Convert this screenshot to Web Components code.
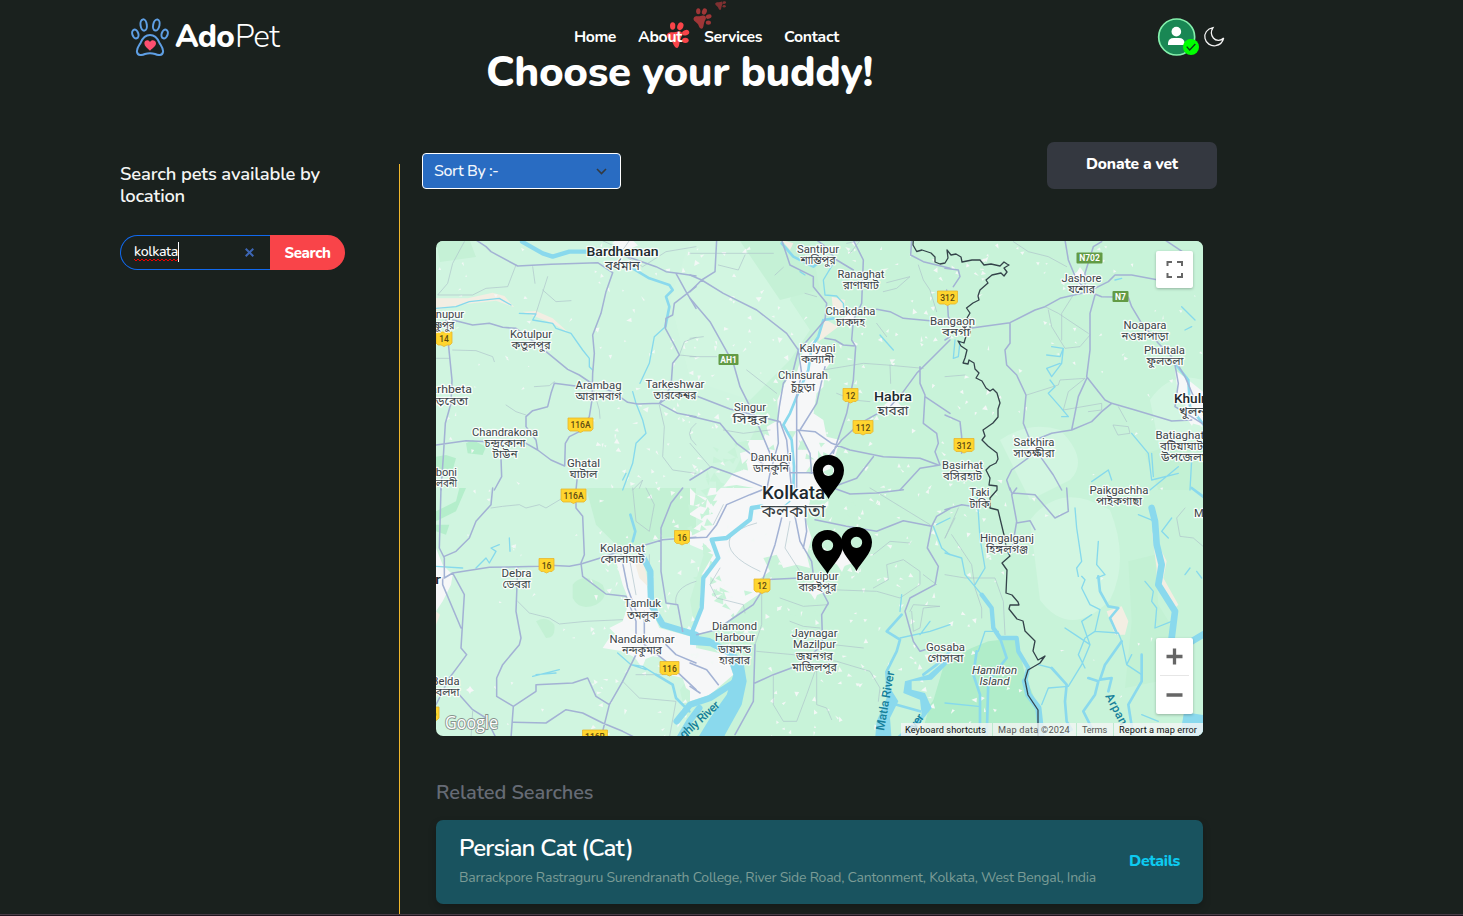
<!DOCTYPE html>
<html lang="en">
<head>
<meta charset="utf-8">
<title>AdoPet</title>
<style>
html,body{margin:0;height:916px;overflow:hidden;background:#1a211e}
body{font-family:Nunito,Lato,"Open Sans",sans-serif;color:#fff}
</style>
</head>
<body>
<pet-app></pet-app>
<script>
const define=(name,html,setup)=>customElements.define(name,class extends HTMLElement{
  connectedCallback(){
    if(this.shadowRoot)return;
    const r=this.attachShadow({mode:'open'});
    r.innerHTML=html;
    if(setup)setup.call(this,r);
  }
});

/* Text run tracked so that it fills the given width */
define('fit-text',`<style>:host{display:inline-block;white-space:nowrap}span{display:inline-block}</style><span><slot></slot></span>`,function(r){
  const s=r.querySelector('span'),w=+this.getAttribute('w');
  const n=this.textContent.length;
  s.style.letterSpacing=((w-s.getBoundingClientRect().width)/n)+'px';
});

define('pet-logo',`<style>
:host{display:flex;align-items:flex-start;margin-top:18px;width:149px}
svg{width:38px;height:38px;flex:none;margin-right:6px}
div{font-size:31.500px;line-height:36px;display:flex;gap:1px;margin-top:1px}
b{font-weight:800}i{font-style:normal;font-weight:300}
</style>
<svg viewBox="0 0 114 114" fill="none" stroke="#5f9fe4" stroke-width="6">
<ellipse cx="38" cy="21" rx="9.5" ry="17" transform="rotate(-8 38 21)"/><ellipse cx="76" cy="21" rx="9.5" ry="17" transform="rotate(12 76 21)"/>
<ellipse cx="13" cy="48" rx="9" ry="13.500" transform="rotate(-18 13 48)"/><ellipse cx="101" cy="48" rx="9" ry="13.500" transform="rotate(18 101 48)"/>
<path d="M57 51C41 51 34 62 29 74C24 83 16 91 18 102C20 114 33 112 42 108Q57 103 72 108C81 112 94 114 96 102C98 91 90 83 85 74C80 62 73 51 57 51Z"/>
<path d="M57 98C48 90 40 84 40 76C40 67 52 63 57 72C62 63 75 67 75 76C75 84 66 90 57 98Z" fill="#ff4f70" stroke="none"/></svg>
<div><b><fit-text w="59">Ado</fit-text></b><i><fit-text w="44">Pet</fit-text></i></div>`);

define('nav-links',`<style>
:host{display:flex;gap:22px;font-size:15.800px;font-weight:700;line-height:20px;margin-top:27px;margin-left:294px;width:266px;position:relative}
fit-text{position:relative}
svg{position:absolute;left:89px;top:-26px;width:70px;height:48px}
</style>
<svg viewBox="0 0 210 144" fill="#f94449">
<defs><g id="p"><path d="M-31-4C-26-14-12-8-1-12C12-17 20-6 11 6C6 15 7 28 3 34C-2 42-11 31-13 23C-17 12-36 8-31-4Z"/><ellipse cx="-14" cy="-29" rx="8" ry="11"/><ellipse cx="9" cy="-28" rx="9" ry="12" transform="rotate(20 9 -28)"/><ellipse cx="25" cy="-9" rx="11" ry="8" transform="rotate(-20 25 -9)"/><ellipse cx="24" cy="14" rx="10" ry="8"/></g></defs>
<use href="#p" transform="translate(43 104)"/><use href="#p" opacity=".6" transform="translate(117 54) scale(.8)"/><use href="#p" opacity=".45" transform="translate(172 9) scale(.48)"/></svg>
<fit-text w="42">Home</fit-text><fit-text w="44">About</fit-text><fit-text w="58">Services</fit-text><fit-text w="55">Contact</fit-text>`);

define('user-tools',`<style>:host{display:flex;margin-left:318px;margin-top:18px;gap:8px}
.a{width:38px;height:38px}.m{width:20px;height:20px;margin-top:9px;overflow:visible}svg{overflow:visible}</style>
<svg class="a" viewBox="0 0 114 114"><circle cx="56" cy="57" r="54" fill="#198754" stroke="#84f0ac" stroke-width="5"/><circle cx="55" cy="41" r="14.500" fill="#fff"/><path d="M30 81V75Q32 60 47 60H63Q78 60 80 75V81Z" fill="#fff"/><circle cx="99" cy="87" r="24" fill="#0f0"/><path d="M86 86L95 96L112 78" stroke="#0b3d18" stroke-width="4" fill="none"/></svg>
<svg class="m" viewBox="0 0 60 60" fill="none" stroke="#f4f4f4" stroke-width="3.800"><path d="M27 2C9 5 0 19 3 34C6 49 20 58 35 56C47 54 56 46 59 33C51 42 36 43 28 33C20 23 22 10 27 2Z"/></svg>`);

define('search-panel',`<style>
:host{display:block;width:279px;padding-top:10px;box-sizing:border-box}
h2{margin:0;font-size:18.400px;line-height:22px;font-weight:600;color:#f4f5f4;display:flex;flex-direction:column;align-items:flex-start}
form{display:flex;width:225px;height:35px;margin-top:28px}
.in{box-sizing:border-box;width:150px;border:1px solid #1169ee;border-right:0;border-radius:18px 0 0 18px;padding:0 16px 0 13px;display:flex;align-items:center;justify-content:space-between;font-size:14.200px;font-weight:500}
.v{display:flex;position:relative;line-height:20px;border-right:1px solid #fff;margin-top:-2px}
.v svg{position:absolute;left:0;top:16px}
.b{width:75px;background:#f94449;border-radius:0 18px 18px 0;display:flex;align-items:center;justify-content:center;font-weight:800;font-size:15px}
</style>
<h2><fit-text w="200">Search pets available by</fit-text><fit-text w="65">location</fit-text></h2>
<form><div class="in"><span class="v"><fit-text w="44">kolkata</fit-text><svg width="44" height="4" viewBox="0 0 44 4" fill="none" stroke="#f20000"><path d="M0 1L2 3L4 1L6 3L8 1L10 3L12 1L14 3L16 1L18 3L20 1L22 3L24 1L26 3L28 1L30 3L32 1L34 3L36 1L38 3L40 1L42 3L44 1"/></svg></span>
<svg width="9" height="9" viewBox="0 0 9 9" stroke="#3d66b4" stroke-width="2"><path d="M.7.700L8.300 8.300M8.300.700L.7 8.300"/></svg></div>
<div class="b"><fit-text w="46">Search</fit-text></div></form>`);

define('sort-select',`<style>:host{display:flex;box-sizing:border-box;width:199px;height:36px;border:1px solid #fff;border-radius:4px;background:#296cc2;align-items:center;justify-content:space-between;padding:0 13px 0 11px;font-size:16px;font-weight:500;margin-top:11px;color:#f1f6fc}</style>
<fit-text w="64.500">Sort By :-</fit-text><svg width="11" height="7" viewBox="0 0 11 7" fill="none" stroke="#343a40" stroke-width="1.600"><path d="M1 1L5.500 5.500L10 1"/></svg>`);

define('donate-button',`<style>:host{display:flex;width:170px;height:47px;border-radius:7px;background:#343840;justify-content:center;font-size:15.500px;font-weight:800;line-height:43px}</style><fit-text w="92">Donate a vet</fit-text>`);

define('map-pin',`<style>:host{position:absolute;width:31px;height:44px}svg{display:block}</style>
<svg width="31" height="44" viewBox="0 0 93 132"><path fill-rule="evenodd" d="M46.500 0C20 0 0 20 0 46C0 80 34 108 46.500 132C59 108 93 80 93 46C93 20 73 0 46.500 0ZM46.500 29A17 17 0 1 1 46.400 29Z"/></svg>`);

/* Map layers, each a quadrant drawn at three units per pixel */
const tiles=[
{at:[436,240],
 road:"M120 0L150 20L165 35L245 78L345 73L485 68L530 98M530 98L510 155L495 220L470 285L475 340L470 400L468 480L460 530L430 575L400 590L388 610L386 678M50 240L110 255L160 250L200 262L240 265L300 310L355 355L395 388L430 405L470 432L530 455L575 487L605 492L670 490L715 460L780 470M670 490L725 520L780 530M30 240L40 340L48 420L45 490L28 550L22 650L15 750M0 615L90 602L160 605L270 610L305 630L345 660L386 678M470 445L355 430L345 460L335 500L290 512L270 530L270 560L300 600L305 630M195 655L197 710L175 750M425 700L420 750M560 45L660 80L690 95L725 100L780 108M720 100L750 155L780 205M780 140L715 190L710 225L690 235L688 265L715 315L730 345L710 370L705 440L670 490",
 thin:"M85 5L50 70L35 130L5 165L110 165L150 145L215 140L240 75M290 80L297 130M335 110L300 220M320 150L360 185L405 182M50 330L120 332L170 350L175 365M0 355L40 355M210 495L240 515L270 525M295 440L340 437L355 425M470 440L490 510L492 535M670 495L685 560L680 650L710 690L780 700M730 345L745 305L780 292M730 345L780 350M560 45L620 80L690 35L780 20M780 550Q740 580 780 615M500 2L560 30L580 2M590 750L620 720L610 745",
 river:"M590 85L640 115L700 135L710 150L690 170L700 200L688 260",
 creek:"M688 260L655 290L640 370L612 430M655 290L640 370L612 430M0 205L60 200L100 185L190 175L225 195M250 220L300 222L290 240L350 250L360 265L405 280L440 330L460 355L460 380L470 390M590 455L600 490L620 540L630 580L600 610L590 670L560 750M570 700L560 720",
 big:"M258 5L320 40L350 50L400 35L450 35L480 45",
 sand:"M0 175L95 175L170 158L205 168L235 202L180 182L90 192L0 210ZM260 215L300 213L350 235L400 280L350 250Z",
 dark:"M0 650L30 645L60 655L50 690L20 700L0 690ZM90 610L110 600L150 620L140 645L95 640Z"},
{at:[690,240],
 road:"M80 0L75 95L35 120L0 155M0 105L35 120L100 160L200 210L290 280L325 330L310 390L280 430L268 500L262 550L265 610L240 700L230 750M0 175L60 245L130 370L150 440L190 520L240 640M275 0L300 75L370 110L370 140L410 190L405 240L345 310L325 330L335 400L320 470L320 750M405 295L435 300L460 315L495 318M490 0L520 60L515 190L490 240L485 300L497 320L490 420L470 520L430 640M380 0L400 15L440 60L490 90M560 208L600 215L640 235L720 242L780 250M780 300L720 360L680 400L640 455L600 500L510 550L455 600L400 670M665 0L662 45L700 65L780 85M690 380L690 430L705 465L700 550L740 580L745 610L735 635L750 675L690 685L630 750M705 470L780 520M320 570L375 575L425 610L480 630L580 650L690 655L745 675M325 570L360 640L365 700M405 380L380 490L330 570M550 650L500 715L430 740M25 470L120 507L270 545L290 600L305 750M300 698L380 698M0 528L90 550L140 610L180 640L240 690M0 720L65 680L120 700L230 745",
 thin:"M0 40L250 40M85 75L145 90L165 45M255 105L280 82M345 160L380 170M580 155L620 145L660 110L590 128M685 75L700 120L720 150L740 215M400 390L520 370L590 375L700 385M560 250L590 290M600 375L602 430M540 485L490 480L440 460M0 295L40 290M170 390L260 460M0 350L80 350M100 570L160 580L240 570M470 10L510 2L480 40M0 610L60 680",
 river:"M275 10L310 50L370 80L395 60M430 235L400 240L385 290L365 320L355 390L320 470L300 520L280 555L305 600L312 680L310 750",
 creek:"M430 70L400 120L405 165L440 168L460 190L462 220M330 95L345 105M570 285L610 330",
 sand:"M275 0L310 10L300 30ZM425 170L465 180L460 220L430 220ZM400 235L445 260L385 305Z",
 urban:"M340 330L370 300L400 320L420 370L405 390L400 440L380 460L370 520L400 540L410 590L450 600L435 650L450 680L440 700L410 720L400 750L225 750L140 735L100 740L130 700L160 690L150 640L180 630L170 600L220 600L230 560L265 540L262 480L290 420L320 400Z"},
{at:[945,240],
 road:"M0 85L40 90L45 110L25 140M5 150L10 230L25 260M75 265L195 248L270 210L300 200L345 175L430 155L490 125L510 105L560 105L640 120M360 0L370 60L395 120L430 155M470 5L445 20L420 100L420 150L470 170L550 172L560 200L590 250L640 310L690 360L720 410L750 480M450 165L435 220L435 330L425 410L480 480L500 490L570 510L680 543L740 540M425 415L400 470L380 570L320 580L270 600M380 570L440 545L470 515L500 490M195 248L195 310L180 330L185 375L215 405L243 465L235 550L255 600M290 655L325 705L350 750M255 650L200 690L185 720L195 750M690 375L700 430L690 500L780 555M660 0L720 40M0 525L45 545L50 590L50 640M0 300L15 290",
 thin:"M205 5L250 35L310 50L365 80M300 200L340 220L430 280M310 210L320 260L360 325L405 320L435 285M385 165L350 220L350 300M245 465L340 435L345 420L420 415L370 455L355 510L470 490L470 510L430 515M0 410L60 405M505 555L550 560L555 580L520 585ZM520 500L545 545",
 river:"M690 370L730 420L735 500L780 560",
 creek:"M320 320L355 325L345 350L305 345M355 325L350 370L320 410L305 385L345 370M315 420L330 440L310 460L345 500L370 530L350 530M30 300L25 355L40 350L45 305M440 725L490 690L500 720M560 580L610 640L620 720L700 700M620 640L625 710M740 660L735 750M710 200L750 240M720 270L740 260M615 750L700 680M510 120L530 115",
 urban:"M690 390L730 420L780 460L780 560L740 550L720 490L700 470Z",
 dark2:"M600 640L780 590L780 750L640 750Z"},
{at:[436,488],
 road:"M15 0L10 180L25 210L25 270L50 255L160 238L310 235L340 232L400 235L435 228L510 205L550 190L630 170L680 155L780 148M170 0L165 50L120 100L100 150L60 190L25 205M50 255L85 320L75 480L92 500L70 530L40 570L0 650M20 290L75 420M20 270L20 290M245 240L240 370L255 450L250 470L200 530L182 570L182 625L232 655L225 750M232 655L300 610L300 590L410 585L455 570L480 625L520 650M232 703L330 705L390 665L440 675L500 705L560 730L600 750M600 500L560 580L520 650L495 750M420 30L420 60L440 85L445 200L435 225L440 265L510 318L570 325L600 400L600 440M555 200L575 300L600 370M740 0L705 45L675 120L675 250L690 345L725 350L740 430M625 370L625 470L690 520L780 605M70 620L110 665L150 690L180 750M690 470L720 500L780 525",
 thin:"M165 60L200 55L250 50L270 60L310 50L330 60L380 30M245 340L280 375L340 390L370 408L450 400L560 395M590 0L600 100L640 130L655 50L630 0M560 580L610 630L720 640L700 750M600 560L700 560M640 200L640 330M780 280Q710 300 720 350M580 210L600 320M105 750L110 670",
 creek:"M120 240L150 210L160 225L180 190L165 180L190 170M220 150L222 190M0 235L80 240M290 565L370 545M300 560L360 555M545 495L585 530L630 545M585 530L620 535L660 560",
 river:"M660 560L710 590L720 630L760 670M583 80L598 130L590 160",
 huge:"M615 195L643 250L645 350L680 410L780 440M725 760L760 700L790 660",
 dark:"M0 70L60 40L70 0L90 0L60 70L0 100ZM0 110L40 110L30 140L0 130Z",
 dark2:"M410 290Q440 250 500 290Q520 330 480 350Q430 370 410 330ZM300 400Q330 380 355 410Q360 450 330 450ZM450 0L780 0L780 140L680 150L560 190L480 110Z",
 sand:"M590 200L620 210L640 300L610 270ZM0 370L12 380L0 410Z",
 urban:"M540 220L590 210L630 270L640 350L670 420L780 450L780 620L750 600L740 570L700 560L690 520L640 490L600 510L560 490L500 480L520 450L540 440L520 420L560 400L570 370L580 340L560 290ZM0 180L20 230L50 260L45 290L20 340L0 370Z"},
{at:[690,488],
 road:"M0 150L50 148L80 110L110 50L180 20L230 0M275 90L255 170L220 270L215 310L190 350L130 390L80 425L20 440M310 60L330 160L365 220L370 260L415 345L395 380L398 470L330 530L250 560L195 585M195 470L190 640L135 740M220 275L330 270M345 80L350 130L340 180M375 95L470 115L560 130L640 98L725 115L740 85L780 62M725 115L712 180L745 235L735 290L660 330L645 370L670 460L690 490L705 485M0 525L50 545L85 590M0 595L30 615M430 0L480 18L560 15L640 5",
 thin:"M120 150Q140 120 200 105M120 150Q100 200 210 250M100 50L70 110M300 100L285 180L330 250M270 330L340 355L415 350M300 400L340 415L390 420M200 490L310 500L440 520L540 550L570 600L565 640M250 560L250 650L280 700L320 700L350 620L375 550M380 550L380 650L410 660L425 695M430 470L520 480M90 240L60 290L80 330L160 350L165 375M550 200L600 160L660 165M700 260L740 290M550 300L595 275L590 230L640 215L690 250L690 290L630 330L560 310L420 305M660 370L670 350L750 355L700 360L690 420L670 430L665 370M215 310L215 410L195 470M540 0L720 110",
 river:"M635 380L590 430L630 455L620 490L590 550M780 490L740 530L700 560M620 650L690 670",
 big:"M215 55L185 60L180 95L110 150L65 155L85 210L40 270L35 360L5 435",
 creek:"M635 320L630 370M275 60L300 40M630 450L720 430L780 410M720 400L690 440M730 115L755 180L780 200M740 110L780 90",
 huge:"M-40 700L0 650L60 630L130 585",
 water:"M0 440L60 450L130 490L160 520L170 580L155 650L105 740L100 756L20 756L60 690L110 620L130 560L110 500L60 475L0 470ZM585 550L600 550L600 600L625 640L600 690L605 756L555 756L560 700L590 630ZM715 560L780 505L780 520L725 575L665 580L665 605L705 615L725 660L650 756L610 756L695 680L690 635L640 615L645 580Z",
 urban:"M0 0L20 20L50 30L60 0L350 0L360 40L345 90L365 150L350 200L360 240L320 230L280 240L260 200L220 210L240 250L200 280L220 310L160 350L130 390L60 430L10 440L30 350L35 260L70 200L0 170L0 130L40 100L0 80ZM20 480L110 500L130 560L60 620L0 640L0 500Z",
 isle:"M775 580L720 650L690 756L780 756Z"},
{at:[945,488],
 isle:"M0 520L80 480L130 460L215 450L240 560L280 660L280 756L-70 756L-30 620Z",
 road:"M0 65L50 50L100 58M195 0L200 15L270 20L330 90L370 70L365 0M215 0L200 20L215 100L200 190M215 105L255 98L270 125",
 thin:"M780 180L745 150L705 145L695 90L720 60M0 260L60 270L150 270L175 340L180 440M0 150L40 60M20 140L80 230L90 300L110 360L110 390M0 150L30 90",
 river:"M95 490L85 560L105 620L105 750M165 450L185 510L130 580L125 750M590 500L590 580L550 650L565 745M530 460L480 530L465 575L500 570L490 610M430 570L460 580L450 620L415 670L440 720M460 265L465 310L490 355L520 360L495 390L515 435M320 540L365 590L360 640L365 700L380 725L330 750M740 0L780 30",
 creek:"M410 265L420 275L410 300L435 350L465 365L450 430L520 435L530 460M0 645L100 655M95 0L105 150L120 240L90 290M0 195L50 210L60 260L110 320M390 60L395 120L410 220L395 240L400 265M460 160L455 230L480 260L455 270M600 280L625 310L620 340L635 360L630 420L680 400M680 90L650 130L670 150M320 540L280 530M290 650L310 600L370 595L410 530L435 470L390 440L360 420M435 470L410 400L440 380M100 490L120 430L160 430M530 460L545 530L590 560M545 530L560 500M720 260L735 240M755 250L770 270M580 80L630 100M450 430L420 450L400 500L420 540M640 700L590 680M0 720L20 740",
 big:"M110 320L140 360L145 420L165 450L215 450L220 490L250 540L240 580",
 huge:"M240 580L250 620L280 660L290 750",
 wide:"M620 60L630 100L635 170L650 230L640 290L690 370L680 450M740 460L790 430M750 690L740 750",
 sand:"M485 370L530 355L550 400L540 440L510 440ZM620 130L635 240L635 290L680 370L700 350L655 270L665 220Z",
 dark2:"M550 220L630 200L640 350L690 430L640 580L540 600L560 400Z"}
];
const border="M913.300 240L913 245L916.700 251.500L922 250L931 253L935 257L935 262L940 264L945 263L948 258L947 250L951 255L956 254L961 257L962 262L972 260L980 260L984 265L991 264L1000 266L1004 262L1007 264L1009 265L1004 268L1007 272L1004 276L1001 273L992 275L986 280L988 283L980 290L978 296L979 300L973 303L966.500 308L970 313L967 318L970 320L970 333L966 336L964 343L958 341L961 346L967 350L965 358L963 363L968 364L969 360L974 363L975 369L979 373L976 378L982 381L986 388L990 391L993 389L997 393L1000 403L998 409L998 417L993 423L983 430L985 436L982 440L988 446L997 453L998 459L996 463L990 466L986 470L990 478L989 485L997 486L997 490L990 498L990 508L998 510L1004 535L1007 551L1010 556L1002 563L1007 570L1006 593L1012 595L1018 602L1019 605L1010 605L1009 609L1017 619L1023 621L1025 631L1035 641L1033 651L1038 660L1045 656L1040 663L1028 670L1025 680L1028 695L1038 710L1038 740";
/* x, baseline, font size, [text, width, 1 = town in bold or 2 = island in italic] */
const labels=[
[622.500,255.500,13,["Bardhaman",72,1]],[622.500,269.500,12,["বর্ধমান",35]],
[818,252.500,11,["Santipur",42]],[818,263.500,11.500,["শান্তিপুর",35]],
[861,278,11,["Ranaghat",47]],[861,289,11.500,["রাণাঘাট",36]],
[850.500,314.500,11,["Chakdaha",50]],[850.500,325.500,11.500,["চাকদহ",29]],
[952.500,325,11,["Bangaon",45]],[956,336,11.500,["বনগাঁ",28]],
[531,338,11,["Kotulpur",42]],[531,349,11.500,["কতুলপুর",39]],
[444,318,11,["shnupur",40]],[440,329,11.500,["বিষ্ণুপুর",29]],
[817.500,352,11,["Kalyani",36]],[817.500,363,11.500,["কল্যানী",33]],
[803,379,11,["Chinsurah",50]],[803,390.500,11.500,["চুঁচুড়া",24]],
[598.500,388.500,11,["Arambag",46]],[598.500,399.500,11.500,["আরামবাগ",46]],
[675,387.500,11,["Tarkeshwar",59]],[675,398.500,11.500,["তারকেশ্বর",43]],
[447,393,11,["Garhbeta",50]],[448,404.500,11.500,["গড়বেতা",40]],
[893,401,13,["Habra",38,1]],[893,414.500,12,["হাবরা",31]],
[750,411,11,["Singur",32]],[750,422.500,11.500,["সিঙ্গুর",35]],
[505,436,11,["Chandrakona",66]],[505,447,11.500,["চন্দ্রকোনা",41]],[505,458,11.500,["টাউন",25]],
[583.500,467,11,["Ghatal",33]],[583.500,478,11.500,["ঘাটাল",28]],
[771,460.500,11,["Dankuni",41]],[771,471.500,11.500,["ডানকুনি",36]],
[793.500,499,18,["Kolkata",63,1]],[793.500,517,18,["কলকাতা",64]],
[1081.500,281.500,11,["Jashore",40]],[1081.500,292.500,11.500,["যশোর",27]],
[1145,329,11,["Noapara",43]],[1145,340,11.500,["নওয়াপাড়া",47]],
[1164.500,353.500,11,["Phultala",41]],[1165,364.500,11.500,["ফুলতলা",37]],
[1195,402.500,13,["Khulna",42,1]],[1194,415.500,12,["খুলনা",30]],
[1034,445.500,11,["Satkhira",41]],[1034,456.500,11.500,["সাতক্ষীরা",41]],
[1183,438.500,11,["Batiaghata",55]],[1183,449.500,11.500,["বটিয়াঘাটা",46]],[1183,460.500,11.500,["উপজেলা",44]],
[962.500,468.500,11,["Basirhat",41]],[962.500,479.500,11.500,["বসিরহাট",39]],
[1119,493.500,11,["Paikgachha",59]],[1119,504.500,11.500,["পাইকগাছা",46]],
[979.500,496,11,["Taki",20]],[979.500,507.500,11.500,["টাকি",20]],
[1007,542,11,["Hingalganj",54]],[1007,553,11.500,["হিঙ্গলগঞ্জ",42]],
[622.500,552,11,["Kolaghat",45]],[622.500,563,11.500,["কোলাঘাট",44]],
[516.500,577,11,["Debra",30]],[516.500,588,11.500,["ডেবরা",28]],
[817.500,579.500,11,["Baruipur",42]],[817.500,590.500,11.500,["বারুইপুর",38]],
[642.500,607,11,["Tamluk",37]],[642.500,618.500,11.500,["তমলুক",31]],
[642,643,11,["Nandakumar",65]],[642,654,11.500,["নন্দকুমার",40]],
[734.500,630,11,["Diamond",45]],[735,641,11,["Harbour",40]],[734.500,652.500,11.500,["ডায়মন্ড",33]],[734.500,663.500,11.500,["হারবার",31]],
[814.500,637,11,["Jaynagar",46]],[814.500,648,11,["Mazilpur",43]],[814.500,659.500,11.500,["জয়নগর",37]],[814.500,670.500,11.500,["মাজিলপুর",45]],
[945.500,651,11,["Gosaba",39]],[945.500,662,11.500,["গোসাবা",36]],
[445.500,684.500,11,["Belda",28]],[445.500,695.500,11.500,["বেলদা",28]],
[442,475.500,11,["alboni",30]],[442,486.500,11.500,["শালবনী",30]],
[1202,517,11,["Ma",16]],[438,584,13,["r",6,1]],
[994.500,674,11,["Hamilton",45,2]],[994.500,685,11,["Island",30,2]]];
const shields=[[444,339,"14",16],[580.500,425,"116A",25],[573.500,496,"116A",25],[546.500,565.500,"16",15],[682,537.500,"16",15],[669.500,668.500,"116",19],[762,586,"12",16],[850.500,395.500,"12",15],[863,427.500,"112",20],[947.500,298,"312",20],[964,445.500,"312",20],[595,737,"116B",25],[434,714,"6",10],[728.500,359.500,"AH1",20,1],[1089.500,258,"N702",26,1],[1120.500,296.500,"N7",16,1]];

define('pet-map',`<style>
:host{display:block;position:relative;width:767px;height:495px;border-radius:7px;overflow:hidden;background:#d0f5e0;font-family:Roboto,sans-serif}
svg.g{display:block}
map-pin{z-index:1}
.fs{position:absolute;right:10px;top:10px;width:37px;height:37px;background:#fff;border-radius:2px;box-shadow:0 1px 3px #0004}
.zm{position:absolute;right:10px;top:397px;width:37px;height:76px;background:#fff;border-radius:2px;box-shadow:0 1px 3px #0004}
.ft{position:absolute;right:0;bottom:0;height:13px;display:flex;background:#f5f5f5c8;font-size:9.200px;line-height:13px;color:#111;padding:0 6px 0 4px}
.ft fit-text+fit-text{margin-left:6px;padding-left:5px;border-left:1px solid #bde9cf}
.ft .lt{color:#555}
</style><svg class="g" width="767" height="495" viewBox="436 241 767 495"></svg>
<map-pin style="left:376.500px;top:213.500px"></map-pin><map-pin style="left:375.500px;top:288.500px"></map-pin><map-pin style="left:404.500px;top:285.500px"></map-pin>
<div class="fs"><svg width="37" height="37" fill="none" stroke="#666" stroke-width="2"><path d="M11.500 15V11H16M21 11H26V15M26 22V26H21M16 26H11.500V22"/></svg></div>
<div class="zm"><svg width="37" height="76" stroke="#666" stroke-width="3.300"><path d="M10.500 18.500H26.500M18.500 10.500V26.500M10.500 57H26.500"/><path d="M4 37.500H33" stroke="#e6e6e6" stroke-width="1"/></svg></div>
<div class="ft"><fit-text w="81">Keyboard shortcuts</fit-text><fit-text class="lt" w="72">Map data ©2024</fit-text><fit-text class="lt" w="25">Terms</fit-text><fit-text w="78">Report a map error</fit-text></div>`,function(r){
  let s='<path fill="#c8f3d9" d="M700 241H1203V736H690L680 690L700 660L690 600L720 500L760 420L740 390L690 380L670 300Z"/><path fill="#d2f6e1" d="M690 241H790L800 270L790 300L810 330L790 360L750 400L690 380L670 300ZM1030 520Q1060 480 1110 510Q1130 560 1110 600Q1070 640 1040 600ZM1000 440Q1030 420 1060 430Q1090 460 1070 480L1030 500ZM1150 400Q1170 370 1203 380V440L1160 450Z"/><path fill="#c5f1d6" d="M436 241H470L476 257L440 262ZM740 241H810L820 290L780 300Z"/>';
  let seed=11;const rnd=()=>(seed=(seed*16807)%2147483647)/2147483647;
  const lay=(key,attr)=>{tiles.forEach(t=>{if(t[key])s+=`<path transform="translate(${t.at}) scale(.33333)" d="${t[key]}" ${attr}/>`})};
  const chip=(x,y,m,c)=>{
    const a=m*(.4+rnd()),b=m*(.4+rnd()),q=rnd()*6.3;
    s+=`<path fill="${c}" d="M${x.toFixed(1)} ${y.toFixed(1)}l${(a*Math.cos(q)).toFixed(1)} ${(a*Math.sin(q)).toFixed(1)}l${(b*Math.cos(q+2)).toFixed(1)} ${(b*Math.sin(q+2)).toFixed(1)}z"/>`;
  };
  lay('dark2','fill="#c3f1d4"');lay('dark','fill="#b4eecb"');lay('isle','fill="#b0edc9"');lay('urban','fill="#f6f7f8"');lay('sand','fill="#f3eee3"');
  /* fields that break up the edge of the built-up area */
  for(let i=0;i<90;i++){const t=rnd()*6.3;chip(775+Math.cos(t)*(62+rnd()*26),530+Math.sin(t)*(70+rnd()*40),9,'#c8f3d9')}
  for(let i=0;i<900;i++){
    const x=436+rnd()*767,y=241+rnd()*495;
    const p=x<590?.28:x<940?1:x<1010?.9:y<420?.5:.14;
    if(rnd()<p)chip(x,y,x>590&&x<1010?4.2:3.2,'#f3f8f6');
  }
  [[625,243,13],[1080,277,10],[1035,450,9],[893,405,9],[850,320,9],[1192,415,11],[842,560,12],[815,590,10],[642,650,18],[470,690,4]].forEach(([x,y,z])=>{
    s+=`<path fill="#f6f7f8" d="M${x-z} ${y}L${x-z*.3} ${y-z*.5}L${x} ${y-z}L${x+z*.5} ${y-z*.3}L${x+z} ${y+z*.2}L${x+z*.2} ${y+z*.5}L${x} ${y+z}L${x-z*.4} ${y+z*.4}Z"/>`});
  const L='fill="none" stroke-linejoin="round" stroke-linecap="round" ';
  lay('thin',L+'stroke="#adc3ca" stroke-width="2"');
  lay('creek',L+'stroke="#86d9ec" stroke-width="4"');
  lay('river',L+'stroke="#8ad9ed" stroke-width="8"');
  lay('big',L+'stroke="#8ad9ed" stroke-width="13"');
  lay('huge',L+'stroke="#8ad9ed" stroke-width="19"');
  lay('wide',L+'stroke="#8ad9ed" stroke-width="20"');
  s+='<path d="M1184 712L1203 715V736H1180Z" fill="#8ad9ed"/>';
  lay('water','fill="#8ad9ed"');
  lay('road',L+'stroke="#a3b2d4" stroke-width="4.600"');
  s+=`<path d="${border}" ${L} stroke="#34434a" stroke-width="1.300"/>`;
  s+='<g fill="#f0c322" text-anchor="middle" font-weight="500" font-size="8.500">';
  shields.forEach(([x,y,t,w,g])=>{
    s+=g?`<rect x="${x-w/2}" y="${y-5.500}" width="${w}" height="11" rx="1" fill="#629b45"/><text x="${x}" y="${y+3.200}" fill="#fff" font-weight="700">${t}</text>`
    :`<path d="M${x-w/2} ${y-7}H${x+w/2}V${y+4}L${x+w/2-2} ${y+6}H${x+3}L${x} ${y+7.500}L${x-3} ${y+6}H${x-w/2+2}L${x-w/2} ${y+4}Z" fill="#ffd52e" stroke="#e6b52e" stroke-width=".8"/><text x="${x}" y="${y+3}" fill="#5c4a12">${t}</text>`});
  s+='</g><g text-anchor="middle" fill="#3c4448" stroke="#fff" stroke-opacity=".85" stroke-width="2.600" stroke-linejoin="round" paint-order="stroke" font-family="Roboto,\'Noto Sans Bengali\',sans-serif">';
  labels.forEach(([x,y,z,[t,w,k]])=>{
    s+=`<text x="${x}" y="${y}" font-size="${z}" textLength="${w}" lengthAdjust="spacingAndGlyphs" ${k==1?'font-weight="500" fill="#20292d"':''} ${k==2?'font-style="italic"':''}>${t}</text>`});
  s+='</g><g font-size="12" fill="#16809a" font-weight="500"><text transform="translate(884 731) rotate(-80)" textLength="60">Matla River</text><text transform="translate(684 739) rotate(-42)" textLength="49">ghly River</text><text transform="translate(914 732) rotate(-55)" textLength="18">iver</text><text transform="translate(1105 696) rotate(62)" textLength="34">Arpan</text></g>';
  s+='<text x="445" y="729" font-family="Open Sans,sans-serif" font-size="18" textLength="53" lengthAdjust="spacingAndGlyphs" fill="#fff" stroke="#87938d" stroke-width="2" paint-order="stroke" font-weight="500">Google</text>';
  r.querySelector('svg.g').innerHTML=s;
});

define('result-card',`<style>
:host{display:flex;box-sizing:border-box;width:767px;height:84px;background:#19535f;border-radius:7px;padding:10px 23px 12px;align-items:center;justify-content:space-between;box-shadow:0 4px 8px #0003}
.t{display:flex;flex-direction:column;margin-top:-1px}
h3{margin:0;font-size:24px;font-weight:600;line-height:32px}
p{margin:0;font-size:14px;line-height:22px;color:#7b9c96;margin-top:3px}
a{font-weight:800;color:#0dcaf0;font-size:15.800px;line-height:20px}
</style><div class="t"><h3><fit-text w="174">Persian Cat (Cat)</fit-text></h3><p><fit-text w="637">Barrackpore Rastraguru Surendranath College, River Side Road, Cantonment, Kolkata, West Bengal, India</fit-text></p></div><a><fit-text w="51">Details</fit-text></a>`);

define('pet-app',`<style>
:host{display:flex;flex-direction:column;width:1463px;height:916px;box-sizing:border-box;overflow:hidden}
header{height:50px;display:flex;padding-left:131px;align-items:flex-start;flex:none}
h1{margin:1px 0 0 486px;font-size:42px;font-weight:800;line-height:44px;height:44px;width:388px}
main{display:flex;padding-left:120px;margin-top:69px;height:750px;flex:none}
search-panel{flex:none;margin-top:-11px}
.col{border-left:1px solid #f0b72c;width:830px;padding-left:22px;box-sizing:border-box;flex:none}
.bar{display:flex;justify-content:space-between;width:795px;margin-top:-22px}
pet-map{margin:52px 0 0 14px}
h2{margin:43px 0 0 14px;font-size:20px;line-height:28px;font-weight:600;color:#666b75}
result-card{margin:13px 0 0 14px}
footer{height:2px;background:linear-gradient(#493c47 50%,#21141f 50%);flex:none}
</style>
<header><pet-logo></pet-logo><nav-links></nav-links><user-tools></user-tools></header>
<h1><fit-text w="387">Choose your buddy!</fit-text></h1>
<main><search-panel></search-panel><section class="col"><div class="bar"><sort-select></sort-select><donate-button></donate-button></div>
<pet-map></pet-map><h2><fit-text w="157.500">Related Searches</fit-text></h2><result-card></result-card></section></main><footer></footer>`);
</script>
</body>
</html>
